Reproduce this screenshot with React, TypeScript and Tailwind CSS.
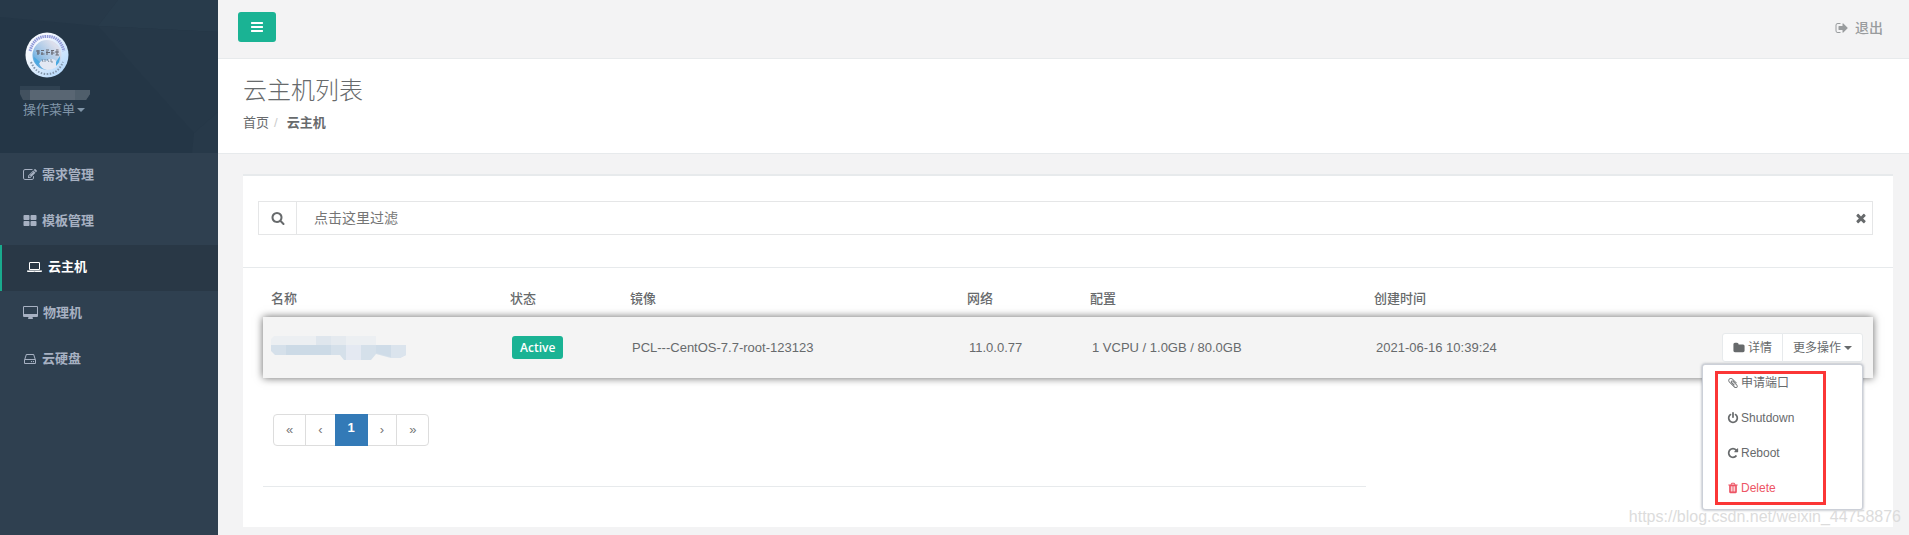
import { useState } from "react";

const ICONS = {
  bars: "M1664 1344v128q0 26-19 45t-45 19h-1408q-26 0-45-19t-19-45v-128q0-26 19-45t45-19h1408q26 0 45 19t19 45zm0-512v128q0 26-19 45t-45 19h-1408q-26 0-45-19t-19-45v-128q0-26 19-45t45-19h1408q26 0 45 19t19 45zm0-512v128q0 26-19 45t-45 19h-1408q-26 0-45-19t-19-45v-128q0-26 19-45t45-19h1408q26 0 45 19t19 45z",
  edit: "M888 1184l116-116-152-152-116 116v56h96v96h56zm440-720q-16-16-33 1l-350 350q-17 17-1 33t33-1l350-350q17-17 1-33zm80 594v190q0 119-84.5 203.5t-203.5 84.5h-832q-119 0-203.5-84.5t-84.5-203.5v-832q0-119 84.5-203.5t203.5-84.5h832q63 0 117 25 15 7 18 23 3 17-9 29l-49 49q-14 14-32 8-23-6-45-6h-832q-66 0-113 47t-47 113v832q0 66 47 113t113 47h832q66 0 113-47t47-113v-126q0-13 9-22l64-64q15-15 35-7t20 29zm-96-738l288 288-672 672h-288v-288zm444 132l-92 92-288-288 92-92q28-28 68-28t68 28l152 152q28 28 28 68t-28 68z",
  thLarge: "M832 1024v384q0 52-38 90t-90 38h-512q-52 0-90-38t-38-90v-384q0-52 38-90t90-38h512q52 0 90 38t38 90zm0-768v384q0 52-38 90t-90 38h-512q-52 0-90-38t-38-90v-384q0-52 38-90t90-38h512q52 0 90 38t38 90zm896 768v384q0 52-38 90t-90 38h-512q-52 0-90-38t-38-90v-384q0-52 38-90t90-38h512q52 0 90 38t38 90zm0-768v384q0 52-38 90t-90 38h-512q-52 0-90-38t-38-90v-384q0-52 38-90t90-38h512q52 0 90 38t38 90z",
  laptop: "M416 1280q-66 0-113-47t-47-113v-704q0-66 47-113t113-47h1088q66 0 113 47t47 113v704q0 66-47 113t-113 47h-1088zm-32-864v704q0 13 9.5 22.5t22.5 9.5h1088q13 0 22.5-9.5t9.5-22.5v-704q0-13-9.5-22.5t-22.5-9.5h-1088q-13 0-22.5 9.5t-9.5 22.5zm1376 928h160v96q0 40-47 68t-113 28h-1600q-66 0-113-28t-47-68v-96h1760zm-720 96q16 0 16-16t-16-16h-160q-16 0-16 16t16 16h160z",
  desktop: "M1792 992v-832q0-13-9.5-22.5t-22.5-9.5h-1600q-13 0-22.5 9.5t-9.5 22.5v832q0 13 9.5 22.5t22.5 9.5h1600q13 0 22.5-9.5t9.5-22.5zm128-832v1088q0 66-47 113t-113 47h-544q0 37 16 77.5t32 71 16 43.5q0 26-19 45t-45 19h-512q-26 0-45-19t-19-45q0-14 16-44t32-70 16-78h-544q-66 0-113-47t-47-113v-1088q0-66 47-113t113-47h1600q66 0 113 47t47 113z",
  hdd: "M1168 1216q0 33-23.5 56.5t-56.5 23.5-56.5-23.5-23.5-56.5 23.5-56.5 56.5-23.5 56.5 23.5 23.5 56.5zm256 0q0 33-23.5 56.5t-56.5 23.5-56.5-23.5-23.5-56.5 23.5-56.5 56.5-23.5 56.5 23.5 23.5 56.5zm112 160v-320q0-13-9.5-22.5t-22.5-9.5h-1216q-13 0-22.5 9.5t-9.5 22.5v320q0 13 9.5 22.5t22.5 9.5h1216q13 0 22.5-9.5t9.5-22.5zm-1230-480h1180l-157-482q-4-13-16-21.5t-26-8.5h-782q-14 0-26 8.5t-16 21.5zm1358 160v320q0 66-47 113t-113 47h-1216q-66 0-113-47t-47-113v-320q0-25 16-75l197-606q17-53 63-86t101-33h782q55 0 101 33t63 86l197 606q16 50 16 75z",
  search: "M1216 832q0-185-131.5-316.5t-316.5-131.5-316.5 131.5-131.5 316.5 131.5 316.5 316.5 131.5 316.5-131.5 131.5-316.5zm512 832q0 52-38 90t-90 38q-54 0-90-38l-343-342q-179 124-399 124-143 0-273.5-55.5t-225-150-150-225-55.5-273.5 55.5-273.5 150-225 225-150 273.5-55.5 273.5 55.5 225 150 150 225 55.5 273.5q0 220-124 399l343 343q37 37 37 90z",
  signOut: "M704 1440q0 4 1 20t.5 26.5-3 23.5-10 19.5-20.5 6.5h-320q-119 0-203.5-84.5t-84.5-203.5v-704q0-119 84.5-203.5t203.5-84.5h320q13 0 22.5 9.5t9.5 22.5q0 4 1 20t.5 26.5-3 23.5-10 19.5-20.5 6.5h-320q-66 0-113 47t-47 113v704q0 66 47 113t113 47h312l11.5 1 11.5 3 8 5.5 7 9 2 13.5zm928-544q0 26-19 45l-544 544q-19 19-45 19t-45-19-19-45v-288h-448q-26 0-45-19t-19-45v-384q0-26 19-45t45-19h448v-288q0-26 19-45t45-19 45 19l544 544q19 19 19 45z",
  times: "M1490 1322q0 40-28 68l-136 136q-28 28-68 28t-68-28l-294-294-294 294q-28 28-68 28t-68-28l-136-136q-28-28-28-68t28-68l294-294-294-294q-28-28-28-68t28-68l136-136q28-28 68-28t68 28l294 294 294-294q28-28 68-28t68 28l136 136q28 28 28 68t-28 68l-294 294 294 294q28 28 28 68z",
  folder: "M1728 608v704q0 92-66 158t-158 66h-1216q-92 0-158-66t-66-158v-960q0-92 66-158t158-66h320q92 0 158 66t66 158v32h672q92 0 158 66t66 158z",
  paperclip: "M1596 1385q0 117-79 196t-196 79q-135 0-235-100l-777-776q-113-115-113-271 0-159 110-270t269-111q158 0 273 113l605 606q10 10 10 22 0 16-30.5 46.5t-46.5 30.5q-13 0-23-10l-606-607q-79-77-181-77-106 0-179 75t-73 181q0 105 76 181l776 777q63 63 145 63 64 0 106-42t42-106q0-82-63-145l-581-581q-26-24-60-24-29 0-48 19t-19 48q0 32 25 59l410 410q10 10 10 22 0 16-31 47t-47 31q-12 0-22-10l-410-410q-63-61-63-149 0-82 57-139t139-57q88 0 149 63l581 581q100 98 100 235z",
  power: "M1664 896q0 156-61 298t-164 245-245 164-298 61-298-61-245-164-164-245-61-298q0-182 80.5-343t226.5-270q43-32 95.5-25t83.5 50q32 42 24.5 94.5t-49.5 84.5q-98 74-151.5 181t-53.5 228q0 104 40.5 198.5t109.5 163.5 163.5 109.5 198.5 40.5 198.5-40.5 163.5-109.5 109.5-163.5 40.5-198.5q0-121-53.5-228t-151.5-181q-42-32-49.5-84.5t24.5-94.5q31-43 84-50t95 25q146 109 226.5 270t80.5 343zm-640-768v640q0 52-38 90t-90 38-90-38-38-90v-640q0-52 38-90t90-38 90 38 38 90z",
  repeat: "M1664 256v448q0 26-19 45t-45 19h-448q-42 0-59-40-17-39 14-69l138-138q-148-137-349-137-104 0-198.5 40.5t-163.5 109.5-109.5 163.5-40.5 198.5 40.5 198.5 109.5 163.5 163.5 109.5 198.5 40.5q119 0 225-52t179-147q7-10 23-12 15 0 25 9l137 138q9 8 9.5 20.5t-7.5 22.5q-109 132-264 204.5t-327 72.5q-156 0-298-61t-245-164-164-245-61-298 61-298 164-245 245-164 298-61q147 0 284.5 55.5t244.5 156.5l130-129q29-31 70-14 39 17 39 59z",
  trash: "M704 1376v-704q0-14-9-23t-23-9h-64q-14 0-23 9t-9 23v704q0 14 9 23t23 9h64q14 0 23-9t9-23zm256 0v-704q0-14-9-23t-23-9h-64q-14 0-23 9t-9 23v704q0 14 9 23t23 9h64q14 0 23-9t9-23zm256 0v-704q0-14-9-23t-23-9h-64q-14 0-23 9t-9 23v704q0 14 9 23t23 9h64q14 0 23-9t9-23zm-544-992h448l-48-117q-7-9-17-11h-317q-10 2-17 11zm928 32v64q0 14-9 23t-23 9h-96v948q0 83-47 143.5t-113 60.5h-832q-66 0-113-58.5t-47-141.5v-952h-96q-14 0-23-9t-9-23v-64q0-14 9-23t23-9h309l70-167q15-37 54-63t79-26h320q40 0 79 26t54 63l70 167h309q14 0 23 9t9 23z",
};

type IconName = keyof typeof ICONS;

const Icon = ({ name, className = "size-3.5" }: { name: IconName; className?: string }) => (
  <svg
    viewBox={name === "laptop" || name === "desktop" ? "0 0 1920 1792" : "0 0 1792 1792"}
    className={`shrink-0 fill-current ${className}`}
    aria-hidden="true"
  >
    <path d={ICONS[name]} />
  </svg>
);

const Caret = () => (
  <svg viewBox="0 0 8 4" className="h-1 w-2 shrink-0 fill-current" aria-hidden="true">
    <path d="M0 0h8L4 4z" />
  </svg>
);

const Logo = () => (
  <svg viewBox="0 0 44 46" className="ml-px h-[46px] w-11" role="img" aria-label="实验室">
    <defs>
      <linearGradient id="ring" x1="0" y1="0" x2="1" y2="1">
        <stop offset="0.3" stopColor="#f4f8fe" />
        <stop offset="1" stopColor="#a9d3fb" />
      </linearGradient>
      <linearGradient id="globe" x1="1" y1="0" x2="0" y2="1">
        <stop offset="0.2" stopColor="#dcdfec" />
        <stop offset="0.6" stopColor="#9cc3e6" />
        <stop offset="1" stopColor="#2f95d6" />
      </linearGradient>
    </defs>
    <ellipse cx="22" cy="23" rx="21.5" ry="22.5" fill="url(#ring)" />
    <ellipse cx="22" cy="23" rx="14.5" ry="15" fill="url(#globe)" />
    <path d="M14 31q4-5 8-2 3-4 8-1l4 4q-4 6-12 6-6-1-8-7z" fill="#e3e8f3" />
    <path d="M9 25l6 5-2 3q-4-3-4-8zM31 30l4-6q0 7-4 10z" fill="#4aa9e2" />
    <path d="M5 19Q9 4 22 4.500Q35 4 39 19" fill="none" stroke="#8f98d8" strokeWidth="3" strokeDasharray="1.500 0.700" />
    <path d="M6 30Q11 42 22 42Q33 42 38 30" fill="none" stroke="#8497ab" strokeWidth="2" strokeDasharray="1.500 1.500" />
    {/* Lettering across the globe, too small to read */}
    <path
      d="M11 19h4M12 21h3M13 18v5M16 18.500h3M17 20v3M16 22h3.500M21 18h3M21 20.500h4M22 19v4M26 18.500h3M26 21h3.500M27 19v4M31 18h2.500M30 20h4M32 19v4M30.500 23h3.500"
      fill="none"
      stroke="#5c5a62"
      strokeWidth="1.2"
      opacity="0.85"
    />
    <path d="M17 27l1 3M20 27v3M22 27l2 3M26 27v3h2" fill="none" stroke="#6f7f92" opacity="0.8" />
  </svg>
);

const menu: { icon: IconName; label: string; iconClass: string }[] = [
  { icon: "edit", label: "需求管理", iconClass: "size-3.5" },
  { icon: "thLarge", label: "模板管理", iconClass: "size-3.5" },
  { icon: "laptop", label: "云主机", iconClass: "h-3.5 w-[15px]" },
  { icon: "desktop", label: "物理机", iconClass: "h-3.5 w-[15px]" },
  { icon: "hdd", label: "云硬盘", iconClass: "size-3.5" },
];

const actions: { icon: IconName; label: string; danger?: boolean }[] = [
  { icon: "paperclip", label: "申请端口" },
  { icon: "power", label: "Shutdown" },
  { icon: "repeat", label: "Reboot" },
  { icon: "trash", label: "Delete", danger: true },
];

const Sidebar = () => (
  <aside className="w-[218px] shrink-0 bg-[#2f4050]">
    <div className="relative h-[153px] bg-[#243646] px-6 pt-8">
      <svg viewBox="0 0 218 153" preserveAspectRatio="none" className="absolute inset-0 size-full" aria-hidden="true">
        <path d="M0 0h118L98 26 0 17z" fill="#273949" />
        <path d="M118 0h100v32L98 26z" fill="#283b4b" />
        <path d="M98 26l120 6v80l-24 21z" fill="#263848" />
        <path d="M218 112v41h-26l2-20z" fill="#273949" />
      </svg>
      <div className="relative">
        <Logo />
        {/* Hidden user name */}
        <svg viewBox="0 0 70 14" className="-ml-1 mt-2 h-3.5 w-[70px]" aria-hidden="true">
          <path d="M0 0h40v4h30v4l-4 6H3L0 8z" fill="#42515f" />
          <path d="M10 4h45v10H10z" fill="#596673" />
          <path d="M0 0h40v4H0z" fill="#304252" />
          <path d="M55 4h15v4l-4 6H55z" fill="#4f5e6b" />
        </svg>
        <button className="-ml-px flex h-5 items-center gap-0.5 text-[13px] text-[#8095a8]">
          操作菜单
          <Caret />
        </button>
      </div>
    </div>
    <nav>
      {menu.map((item) => (
        <a
          key={item.label}
          href="#"
          className={
            item.label === "云主机"
              ? "flex h-[46px] items-center gap-1.5 border-l-2 border-[#19aa8d] bg-[#293846] pb-0.5 pl-[25px] text-[13px] font-bold text-white"
              : "flex h-[46px] items-center gap-[5px] pb-0.5 pl-[23px] text-[13px] font-bold text-[#a7b1c2] hover:text-white"
          }
        >
          <Icon name={item.icon} className={item.iconClass} />
          {item.label}
        </a>
      ))}
    </nav>
  </aside>
);

const Filter = () => {
  const [value, setValue] = useState("");

  return (
    <div className="ml-[15px] mr-5 flex h-[34px] border border-[#e5e6e7]">
      <label htmlFor="filter" className="flex w-[38px] items-center justify-center border-r border-[#e5e6e7]" aria-label="过滤">
        <Icon name="search" />
      </label>
      <input
        id="filter"
        value={value}
        onChange={(e) => setValue(e.target.value)}
        placeholder="点击这里过滤"
        className="min-w-0 flex-1 px-[17px] text-[14px] outline-none placeholder:text-[#757575]"
      />
      <button className="px-1" aria-label="清除" onClick={() => setValue("")}>
        <Icon name="times" />
      </button>
    </div>
  );
};

const ActionMenu = () => (
  <div className="absolute right-0 top-full z-10 mt-0.5 w-[161px] rounded-[3px] border border-[#ccd0d8] bg-white pb-1 shadow-[0_0_3px_rgba(86,96,117,0.6)]">
    {actions.map((action) => (
      <button
        key={action.label}
        className={
          action.danger
            ? "flex h-[35px] w-full items-center gap-0.5 pl-6 text-[12px] text-[#ed5565]"
            : "flex h-[35px] w-full items-center gap-0.5 pl-6 text-[12px] text-[#676a6c] hover:bg-gray-50"
        }
      >
        <Icon name={action.icon} className="size-3" />
        {action.label}
      </button>
    ))}
    {/* Highlight frame */}
    <div className="pointer-events-none absolute left-3 top-1.5 h-[134px] w-[111px] border-[3px] border-[#fb3636]" />
  </div>
);

const HostTable = () => (
  <table className="w-full table-fixed border-separate border-spacing-0 text-left text-[13px]">
    <colgroup>
      <col className="w-[239px]" />
      <col className="w-[120px]" />
      <col className="w-[337px]" />
      <col className="w-[123px]" />
      <col className="w-[284px]" />
      <col />
      <col className="w-[180px]" />
    </colgroup>
    <thead>
      <tr className="h-[37px]">
        {["名称", "状态", "镜像", "网络", "配置", "创建时间"].map((title) => (
          <th key={title} className="px-2 font-medium">{title}</th>
        ))}
        <th aria-label="操作" />
      </tr>
    </thead>
    <tbody>
      <tr className="h-[61px] bg-[#f4f4f4] shadow-[0_0_8px_rgba(0,0,0,0.6)]">
        <td className="px-2">
          <svg viewBox="0 0 135 24" className="h-6 w-[135px]" aria-hidden="true">
            <path d="M3 0h102v9H0V3z" fill="#eceff2" />
            <path d="M45 0h15v9H45z" fill="#dfe6ed" />
            <path d="M60 0h15v9H60z" fill="#e5eaef" />
            <path d="M0 9h135v10l-6 3h-9l-15-4-5 6H73l-4-5H4l-4-4z" fill="#d5e0ea" />
            <path d="M15 9h45v10H15z" fill="#ccdae6" />
            <path d="M75 9h15v15H75z" fill="#e4e9f2" />
            <path d="M105 9h15v12l-15-4z" fill="#cfdce8" />
            <path d="M120 9h15v10l-6 3h-9z" fill="#dbe4ed" />
          </svg>
        </td>
        <td className="px-2.5">
          <span className="inline-flex h-[23px] items-center rounded-[3px] bg-[#1ab394] px-2 font-['Open_Sans',sans-serif] text-[12px] font-semibold text-white">
            Active
          </span>
        </td>
        <td className="px-2.5">PCL---CentOS-7.7-root-123123</td>
        <td className="px-2.5">11.0.0.77</td>
        <td className="px-2.5">1 VCPU / 1.0GB / 80.0GB</td>
        <td className="px-2.5">2021-06-16 10:39:24</td>
        <td className="px-2.5">
          <div className="relative flex justify-end">
            <button className="flex h-[29px] items-center gap-[3px] rounded-l-[3px] border border-[#e7eaec] bg-white px-2.5 text-[12px]">
              <Icon name="folder" className="size-3" />
              详情
            </button>
            <button className="-ml-px flex h-[29px] items-center gap-[3px] rounded-r-[3px] border border-[#e7eaec] bg-white px-2.5 text-[12px]">
              更多操作
              <Caret />
            </button>
            <ActionMenu />
          </div>
        </td>
      </tr>
    </tbody>
  </table>
);

const Pagination = () => (
  <div className="flex h-8 text-[13px]">
    {["«", "‹", "1", "›", "»"].map((page) => (
      <button
        key={page}
        className={
          page === "1"
            ? "relative -ml-px border border-[#337ab7] bg-[#337ab7] px-3 pb-1 font-bold text-white"
            : "-ml-px border border-[#ddd] bg-white px-3 text-[#777] first:ml-0 first:rounded-l last:rounded-r"
        }
      >
        {page}
      </button>
    ))}
  </div>
);

export default function App() {
  return (
    <div className="relative flex min-h-screen bg-[#f3f3f4] font-['Liberation_Sans','Noto_Sans_CJK_SC',sans-serif] text-[13px] text-[#676a6c]">
      <Sidebar />

      <div className="min-w-0 flex-1">
        {/* Top Bar */}
        <header className="flex h-[59px] items-start justify-between border-b border-[#e7eaec] pl-5 pr-[26px] pt-3">
          <button className="flex h-[30px] w-[38px] items-center justify-center rounded-[3px] bg-[#1ab394] text-white" aria-label="切换菜单">
            <Icon name="bars" />
          </button>
          <a href="#" className="flex h-8 items-center gap-1.5 text-[14px] font-medium text-[#999c9e]">
            <Icon name="signOut" />
            退出
          </a>
        </header>

        {/* Page Heading */}
        <div className="h-[95px] border-b border-[#e7eaec] bg-white px-[25px] pt-4">
          <h2 className="text-[24px] font-light leading-8">云主机列表</h2>
          <ol className="mt-1.5 flex text-[13px] leading-5">
            <li><a href="#">首页</a></li>
            <li className="px-[5px] text-[#ccc]">/</li>
            <li className="pl-1 font-bold">云主机</li>
          </ol>
        </div>

        <main className="pb-2 pl-[25px] pr-4 pt-5">
          <div className="border-t-2 border-[#e7eaec] bg-white pt-[25px]">
            <Filter />
            <div className="mt-8 border-t border-[#e7eaec] px-5 pb-10 pt-3">
              <HostTable />
              <div className="pl-2.5 pt-9">
                <Pagination />
              </div>
              <hr className="mt-10 w-[68.5%] border-[#e7eaec]" />
            </div>
          </div>
        </main>
      </div>

      <p className="pointer-events-none absolute bottom-1.5 right-2 z-20 text-[16px] leading-6 text-[#dcdcdc]">
        https://blog.csdn.net/weixin_44758876
      </p>
    </div>
  );
}
